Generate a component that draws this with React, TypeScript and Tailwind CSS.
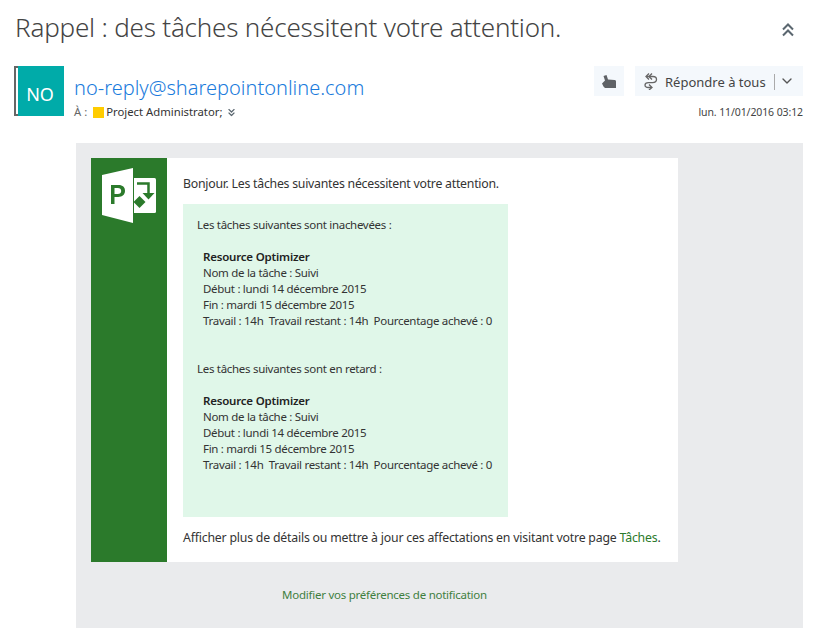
import { ChevronDown } from 'lucide-react';

const font = { fontFamily: '"Noto Sans", "Open Sans", sans-serif' };

const ProjectLogo = () => (
  <svg width="54" height="55" viewBox="0 0 54 55" className="block">
    <path d="M0 7 31 0v55L0 47z" fill="#fff" />
    <path
      fillRule="evenodd"
      d="M9 17h7.500c4.300 0 6.500 2.200 6.500 5.800 0 3.900-2.700 6.200-6.800 6.200H12.500v7H9zM12.500 20v6h3.300c2.200 0 3.400-1 3.400-3s-1.200-3-3.400-3z"
      fill="#2b7a2b"
    />
    <path d="M32 10h20.500a1.500 1.500 0 0 1 1.500 1.500v32a1.500 1.500 0 0 1-1.500 1.500H32z" fill="#fff" />
    <path d="M35 15.500h11.500V26" fill="none" stroke="#2b7a2b" strokeWidth="2.500" />
    <path d="M40.500 25h12l-6 6.500z" fill="#2b7a2b" />
    <path d="M37.500 28l6 6-6 6-6-6z" fill="#2b7a2b" />
  </svg>
);

const DoubleChevron = ({ up, size, stroke }: { up?: boolean; size: number; stroke: number }) => (
  <svg
    width={size}
    height={size * 1.2}
    viewBox="0 0 12 14.400"
    fill="none"
    stroke="#5b6770"
    strokeWidth={stroke}
    className={up ? 'block' : 'block rotate-180'}
  >
    <path d="M1 6.500 6 1.500l5 5" />
    <path d="M1 12.500 6 7.500l5 5" />
  </svg>
);

const LikeIcon = () => (
  <svg width="14" height="13" viewBox="0 0 14 13" className="block">
    <path
      d="M1.500 1 4.500 0 6 4.500l6.500.5c1 0 1.500.6 1.500 1.500V13H4c-1.300 0-2-.6-2.500-1.500L0 8.500l3-3z"
      fill="#5f6266"
    />
  </svg>
);

const ReplyAllIcon = () => (
  <svg width="15" height="17" viewBox="0 0 15 17" fill="none" stroke="#666" strokeWidth="1.300" className="block">
    <path d="M6 .500 3 3.500l3 3" />
    <path d="M9 .500 6 3.500l3 3" />
    <path d="M4 3.500h6c2.500 0 3.500 1.500 3.500 3s-1.500 3-4 3.200H5.500C3 9.700 2 10.500 2 12c0 1.500 1.500 2.500 3.500 2.500H8" />
    <path d="M6 11.500l3 3-3 2.500" />
  </svg>
);

const TaskBlock = ({ heading, className }: { heading: string; className?: string }) => (
  <div className={className}>
    <p>{heading}</p>
    <div className="mt-4 pl-1.5">
      <p className="font-semibold text-[#222] tracking-[-0.2px]">Resource Optimizer</p>
      <p>Nom de la tâche : Suivi</p>
      <p>Début : lundi 14 décembre 2015</p>
      <p>Fin : mardi 15 décembre 2015</p>
      <p className="whitespace-pre">Travail : 14h  Travail restant : 14h  Pourcentage achevé : 0</p>
    </div>
  </div>
);

export default function App() {
  return (
    <div className="w-[814px] h-[638px] overflow-hidden bg-white text-[#333]" style={font}>
      <header className="flex items-center justify-between h-[66px] pl-[15px] pr-5 pb-3">
        <h1 className="text-[26px] leading-8 font-light text-[#444] tracking-[-0.2px] whitespace-nowrap">
          Rappel : des tâches nécessitent votre attention.
        </h1>
        <div className="mt-1.5">
          <DoubleChevron up size={12} stroke={2} />
        </div>
      </header>

      <div className="flex justify-between pl-3.5 pr-[11px]">
        <div className="flex">
          <div className="flex w-[50px] h-[50px] border-2 border-r-0 border-[#666] bg-white">
            <div className="ml-0.5 -my-0.5 flex-1 bg-[#00aba9] text-white text-[18px] flex items-center justify-center pt-1.5 pr-0.5">
              NO
            </div>
          </div>
          <div className="ml-2.5 pt-[7px]">
            <div className="text-[#1a7bdc] text-[20px] leading-[30px] font-light whitespace-nowrap">
              no-reply@sharepointonline.com
            </div>
            <div className="flex items-center text-[11.300px] leading-4 mt-px">
              <span className="text-[#666]">À :</span>
              <span className="ml-1.5 w-[11px] h-[11px] bg-[#ffcc00]" />
              <span className="ml-[2px] text-[#333]">Project Administrator;</span>
              <span className="ml-1.5">
                <DoubleChevron size={7} stroke={2.200} />
              </span>
            </div>
          </div>
        </div>
        <div className="flex flex-col items-end">
          <div className="flex gap-[11px] h-[30px]">
            <button className="w-[30px] bg-[#f4f8fc] flex items-center justify-center">
              <LikeIcon />
            </button>
            <button className="w-[168px] bg-[#f4f8fc] flex items-center pl-2 text-[#444] text-[13px]">
              <ReplyAllIcon />
              <span className="ml-[7px] pt-[3px] whitespace-nowrap">Répondre à tous</span>
              <span className="ml-2 mt-0.5 w-px h-4 bg-[#aaa]" />
              <ChevronDown className="ml-1 w-4 h-4 text-[#555]" />
            </button>
          </div>
          <div className="text-[10.500px] leading-4 mt-2 text-[#444] tracking-[-0.1px] whitespace-nowrap">
            lun. 11/01/2016 03:12
          </div>
        </div>
      </div>

      <main className="ml-[76px] mr-[11px] mt-[23px] h-[485px] bg-[#eaebed] p-[15px]">
        <div className="flex w-[587px] h-[404px] bg-white">
          <aside className="w-[76px] bg-[#2b7a2b] pl-[11px] pt-[10px] shrink-0">
            <ProjectLogo />
          </aside>
          <div className="flex-1 pl-4 text-[12.300px] leading-4 text-[#333] tracking-[-0.2px]">
            <p className="mt-[18px] whitespace-nowrap tracking-[-0.25px]">
              Bonjour. Les tâches suivantes nécessitent votre attention.
            </p>
            <div className="mt-3 w-[325px] h-[313px] bg-[#e0f7e9] pl-3.5 pt-[13px] text-[11.500px] tracking-[-0.3px]">
              <TaskBlock heading="Les tâches suivantes sont inachevées :" />
              <TaskBlock heading="Les tâches suivantes sont en retard :" className="mt-[32px]" />
            </div>
            <p className="mt-[13px] whitespace-nowrap">
              Afficher plus de détails ou mettre à jour ces affectations en visitant votre page{' '}
              <span className="text-[#2b7a2b]">Tâches</span>.
            </p>
          </div>
        </div>
        <div className="w-[587px] mt-[25px] text-center text-[11.500px] leading-4 text-[#3f7f3f] tracking-[-0.25px]">
          Modifier vos préférences de notification
        </div>
      </main>
    </div>
  );
}
